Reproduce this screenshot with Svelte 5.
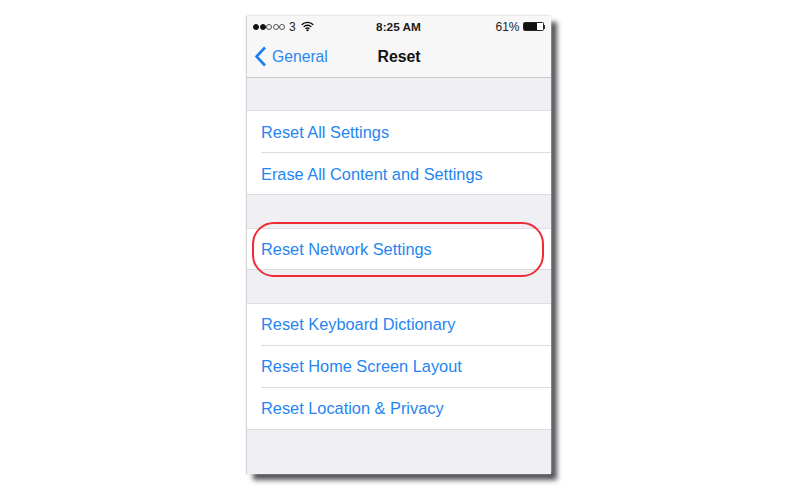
<script lang="ts">
  const groups = [
    ['Reset All Settings', 'Erase All Content and Settings'],
    ['Reset Network Settings'],
    ['Reset Keyboard Dictionary', 'Reset Home Screen Layout', 'Reset Location & Privacy']
  ];
</script>

<div class="page">
  <div class="phone">
    <div class="status">
      <div class="status-left">
        <span class="dots">
          <i class="on"></i><i class="on"></i><i></i><i></i><i></i>
        </span>
        <span>3</span>
        <svg class="wifi" viewBox="0 0 14 11" width="13" height="11" aria-hidden="true">
          <path d="M.8 3.6a8.8 8.8 0 0 1 12.4 0M2.9 5.9a5.8 5.8 0 0 1 8.2 0M4.9 8a3 3 0 0 1 4.2 0" fill="none" stroke="#000" stroke-width="1.5" />
          <path d="M7 11 5.4 9.2a2.2 2.2 0 0 1 3.2 0z" fill="#000" />
        </svg>
      </div>
      <span class="clock">8:25 AM</span>
      <div class="status-right">
        <span>61%</span>
        <span class="battery"><span class="level"></span></span>
        <span class="nub"></span>
      </div>
    </div>

    <div class="nav">
      <div class="back">
        <svg viewBox="0 0 13 21" width="13" height="21" aria-hidden="true">
          <path d="M11 1.5 2.5 10.5 11 19.5" fill="none" stroke="#1a7ff5" stroke-width="2.6" />
        </svg>
        <span>General</span>
      </div>
      <span class="title">Reset</span>
    </div>

    <div class="content">
      {#each groups as rows}
        <ul class="group">
          {#each rows as row}
            <li><span class="label">{row}</span></li>
          {/each}
        </ul>
      {/each}
    </div>

    <div class="ring"></div>
  </div>
</div>

<style>
  :global(body) {
    margin: 0;
    background: #fff;
  }

  .page {
    height: 488px;
    box-sizing: border-box;
    padding: 16px 0 0 247px;
    overflow: hidden;
    font-family: "Liberation Sans", Arial, sans-serif;
  }

  .phone {
    position: relative;
    width: 304px;
    height: 458px;
    background: #efeff4;
    box-shadow: -1px 0 1px #d4d4d7, 0 -1px 2px #e6e6e8, 6px 6px 5px #55555a;
  }

  .status {
    height: 20px;
    box-sizing: border-box;
    padding: 1px 6px 0 6px;
    display: grid;
    grid-template-columns: 1fr auto 1fr;
    align-items: center;
    background: #f7f7f8;
    font-size: 12px;
    color: #222;
  }

  .status-left {
    display: flex;
    align-items: center;
    gap: 4px;
  }

  .dots {
    display: flex;
    gap: 0.5px;
  }

  .dots i {
    width: 6px;
    height: 6px;
    box-sizing: border-box;
    border: 0.7px solid #555;
    border-radius: 50%;
  }

  .dots i.on {
    background: #111;
    border-color: #111;
  }

  .wifi {
    margin-left: 1px;
    margin-top: -1px;
  }

  .clock {
    font-weight: bold;
    font-size: 11.8px;
    padding-right: 1px;
    color: #1c1c1c;
  }

  .status-right {
    display: flex;
    align-items: center;
    justify-content: flex-end;
  }

  .battery {
    width: 21px;
    height: 9px;
    margin-left: 3px;
    box-sizing: border-box;
    border: 1px solid #222;
    border-radius: 1.5px;
    background: #fff;
  }

  .level {
    display: block;
    width: 13px;
    height: 100%;
    background: #111;
  }

  .nub {
    width: 1.5px;
    height: 4px;
    background: #333;
  }

  .nav {
    position: relative;
    height: 41px;
    display: flex;
    align-items: center;
    justify-content: center;
    background: #f7f7f8;
    border-bottom: 1px solid #c8c8cc;
  }

  .back {
    position: absolute;
    left: 7px;
    top: 10px;
    display: flex;
    align-items: center;
    gap: 5px;
    color: #2a86f0;
    font-size: 15.7px;
  }

  .title {
    font-size: 15.8px;
    font-weight: bold;
    color: #111;
    margin-top: 1px;
  }

  .content {
    display: flex;
    flex-direction: column;
    gap: 33px;
    padding-top: 32px;
  }

  .group {
    margin: 0;
    padding: 0 0 0 14px;
    list-style: none;
    background: #fff;
    border-top: 1px solid #dfdfe3;
    border-bottom: 1px solid #dcdce0;
  }

  .group li {
    height: 42px;
    box-sizing: border-box;
    display: flex;
    align-items: center;
    border-top: 1px solid #dcdce0;
  }

  .group li:first-child {
    height: 41px;
    border-top: none;
  }

  .group li:only-child {
    height: 40px;
  }

  .label {
    font-size: 16.35px;
    color: #2585f2;
  }

  .group:first-child .label {
    margin-top: 2px;
  }

  /* the red annotation drawn over the screenshot */
  .ring {
    position: absolute;
    left: 5px;
    top: 206px;
    width: 292px;
    height: 55px;
    box-sizing: border-box;
    border: 2px solid #ee2b36;
    border-radius: 22px;
  }
</style>
